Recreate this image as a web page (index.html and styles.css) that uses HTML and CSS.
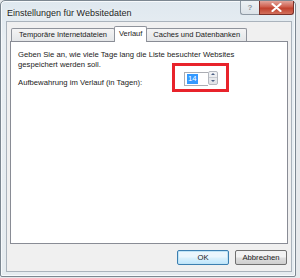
FILE: index.html
```html
<!DOCTYPE html>
<html lang="de">
<head>
    <meta charset="UTF-8">
    <title>Einstellungen für Websitedaten</title>
    <link rel="stylesheet" href="styles.css">
</head>
<body>

    <!-- Dialog Window -->
    <div class="window">
        <div class="titlebar">
            <span class="title">Einstellungen für Websitedaten</span>
            <div class="controls">
                <span class="btn-help">?</span>
                <span class="btn-close">
                    <svg width="11" height="9" viewBox="0 0 11 9">
                        <path d="M1.5 1 L9.5 8 M9.5 1 L1.5 8" stroke="#fff" stroke-width="2.2" stroke-linecap="round"/>
                    </svg>
                </span>
            </div>
        </div>

        <div class="client">
            <div class="tabs">
                <span class="tab">Temporäre Internetdateien</span>
                <span class="tab active">Verlauf</span>
                <span class="tab">Caches und Datenbanken</span>
            </div>

            <div class="panel">
                <p class="desc">Geben Sie an, wie viele Tage lang die Liste besuchter Websites gespeichert werden soll.</p>
                <div class="row">
                    <span class="label">Aufbewahrung im Verlauf (in Tagen):</span>
                    <div class="highlight">
                        <div class="spinner">
                            <span class="value"><span class="sel">14</span></span>
                            <span class="arrows">
                                <span class="arrow up"></span>
                                <span class="arrow down"></span>
                            </span>
                        </div>
                    </div>
                </div>
            </div>

            <div class="buttons">
                <button class="default">OK</button>
                <button>Abbrechen</button>
            </div>
        </div>
    </div>

</body>
</html>
```

FILE: styles.css
```css
/* Global */
html, body {
    margin: 0;
    padding: 0;
}

body {
    width: 300px;
    height: 278px;
    overflow: hidden;
    background: #e6e9ec;
    font-family: 'Liberation Sans', Arial, sans-serif;
    font-size: 7.7px;
    color: #1b1b1b;
}

/* Window frame */
.window {
    width: 296px;
    height: 277px;
    border: 1px solid #7c8791;
    border-radius: 5px 5px 2px 2px;
    background: linear-gradient(to bottom, #dfe8ef, #e9eff3 40px, #e6ecf0);
    box-shadow: inset 0 0 0 1px #f7fafc;
    padding: 0 3px 4px 5px;
    box-sizing: border-box;
    display: flex;
    flex-direction: column;
}

/* Title bar */
.titlebar {
    height: 20px;
    display: flex;
    align-items: flex-start;
    justify-content: space-between;
}

.title {
    font-size: 9px;
    margin-top: 7px;
    margin-left: 1px;
    color: #1e1e1e;
    text-shadow: 0 0 4px #ffffff;
}

.controls {
    display: flex;
    margin-right: -2px;
}

.btn-help {
    width: 19px;
    height: 14px;
    box-sizing: border-box;
    border: 1px solid #8e99a4;
    border-top: none;
    border-right: none;
    border-radius: 0 0 0 3px;
    background: linear-gradient(to bottom, #eef2f5, #dbe2e8);
    color: #8b96a1;
    font-size: 8px;
    font-weight: bold;
    text-align: center;
    line-height: 13px;
}

.btn-close {
    width: 35px;
    height: 14px;
    box-sizing: border-box;
    border: 1px solid #7b3129;
    border-top: none;
    border-radius: 0 0 3px 0;
    background: linear-gradient(to bottom, #e2a59c, #cf5e4d 45%, #c0412e 55%, #d2705c);
    display: flex;
    align-items: center;
    justify-content: center;
}

/* Client area */
.client {
    flex: 1;
    background: #f0f0f0;
    border: 1px solid #aab3bc;
    padding: 4px 3px 0 3px;
    display: flex;
    flex-direction: column;
}

/* Tabs */
.tabs {
    display: flex;
    align-items: flex-end;
    height: 15px;
    padding-left: 1px;
    position: relative;
    z-index: 1;
    font-size: 7.5px;
}

.tab {
    height: 12px;
    line-height: 12px;
    padding: 0 6px;
    border: 1px solid #8f939b;
    border-bottom: none;
    margin-right: -1px;
    border-radius: 2px 2px 0 0;
    background: linear-gradient(to bottom, #f4f4f4, #e4e6e8);
    white-space: nowrap;
}

.tab:first-child {
    padding: 0 7px;
}

.tab.active {
    height: 15px;
    line-height: 13px;
    background: #ffffff;
    margin-bottom: -1px;
    padding: 0 4px;
    position: relative;
    z-index: 2;
}

/* Tab panel */
.panel {
    height: 203px;
    background: #ffffff;
    border: 1px solid #898c95;
    box-sizing: border-box;
    padding: 8px 7px;
}

.desc {
    margin: 0;
    width: 232px;
    line-height: 10px;
}

.row {
    display: flex;
    align-items: center;
}

.label {
    flex: none;
    width: 154px;
    margin-top: 3px;
}

/* Red annotation frame */
.highlight {
    margin-top: -7px;
    width: 57px;
    height: 29px;
    box-sizing: border-box;
    border: 3px solid #e8232b;
    display: flex;
    align-items: center;
    padding-left: 9px;
}

.spinner {
    display: flex;
    height: 14px;
}

.value {
    width: 21px;
    height: 12px;
    margin-top: 1px;
    border: 1px solid #abadb3;
    border-right: none;
    background: #ffffff;
    display: flex;
    align-items: center;
    padding-left: 2px;
}

.sel {
    background: #3399ff;
    color: #ffffff;
    line-height: 10px;
    padding: 0 1px;
}

.arrows {
    width: 10px;
    display: flex;
    flex-direction: column;
    border: 1px solid #b4b8bf;
    border-radius: 2px;
    background: linear-gradient(to bottom, #f2f3f5, #dfe2e6);
    box-sizing: border-box;
}

.arrow {
    flex: 1;
    display: flex;
    align-items: center;
    justify-content: center;
}

.arrow::after {
    content: "";
    border-left: 2px solid transparent;
    border-right: 2px solid transparent;
}

.arrow.up::after {
    border-bottom: 2px solid #4d6185;
}

.arrow.down {
    border-top: 1px solid #c9ccd1;
}

.arrow.down::after {
    border-top: 2px solid #4d6185;
}

/* Buttons */
.buttons {
    display: flex;
    justify-content: flex-end;
    gap: 6px;
    margin-top: 6px;
    padding-right: 1px;
}

button {
    width: 52px;
    height: 15px;
    padding: 0;
    font-family: 'Liberation Sans', Arial, sans-serif;
    font-size: 7.7px;
    color: #1b1b1b;
    border: 1px solid #707070;
    border-radius: 2px;
    background: linear-gradient(to bottom, #f2f2f2 45%, #dddddd 55%, #cfcfcf);
}

button.default {
    border-color: #3c7fb1;
    box-shadow: inset 0 0 0 1px #c0e4f6;
    background: linear-gradient(to bottom, #eaf6fd 45%, #d9f0fc 55%, #bee6fd);
}
```
